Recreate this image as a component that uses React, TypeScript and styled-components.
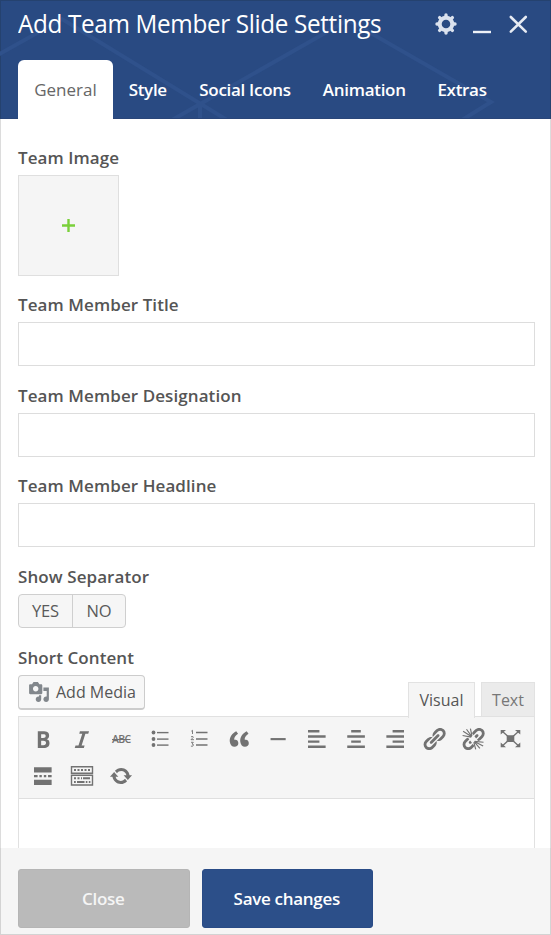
import React from "react";
import styled, { createGlobalStyle } from "styled-components";

const GlobalStyle = createGlobalStyle`
  *, *::before, *::after { box-sizing: border-box; }
  body { margin: 0; font-family: "Open Sans", "Noto Sans", sans-serif; }
  button, input { font-family: inherit; margin: 0; }
`;

const Panel = styled.div`
  width: 551px;
  height: 935px;
  display: flex;
  flex-direction: column;
  background: #fff;
  overflow: hidden;
`;

const Header = styled.header`
  position: relative;
  flex: 0 0 119px;
  display: flex;
  flex-direction: column;
  justify-content: space-between;
  background: #294a82;
  border: 1px solid #25426f;
  border-bottom-color: #2a4679;
  padding: 0 17px;
`;

const HeaderPattern = styled.svg`
  position: absolute;
  left: -1px;
  top: -1px;
`;

const TitleBar = styled.div`
  position: relative;
  display: flex;
  align-items: center;
  height: 46px;
`;

const Title = styled.h1`
  flex: 1;
  margin: 0;
  color: #fff;
  font-size: 25.5px;
  line-height: 44px;
  height: 46px;
  font-weight: 400;
  letter-spacing: -0.35px;
  transform: scaleX(0.951);
  transform-origin: left;
  white-space: nowrap;
`;

const WindowActions = styled.div`
  display: flex;
  align-items: center;
  gap: 16px;
  margin-right: 4px;
`;

const IconButton = styled.button`
  display: flex;
  padding: 0;
  border: 0;
  background: none;
`;

const Tabs = styled.nav`
  position: relative;
  display: flex;
  margin-bottom: -1px;
`;

const Tab = styled.button<{ $active?: boolean; $width: number }>`
  width: ${(p) => p.$width}px;
  height: 59px;
  padding: 0 0 1px;
  border: 0;
  border-radius: 6px 6px 0 0;
  background: ${(p) => (p.$active ? "#fff" : "transparent")};
  color: ${(p) => (p.$active ? "#666" : "#fff")};
  font-size: 17px;
  font-weight: ${(p) => (p.$active ? 400 : 600)};
  letter-spacing: ${(p) => (p.$active ? "0" : "-0.3px")};
  white-space: nowrap;
`;

const Body = styled.main`
  flex: 1;
  min-height: 0;
  overflow: hidden;
  display: flex;
  flex-direction: column;
  padding: 26px 16px 0 17px;
  border: solid #dcdcdc;
  border-width: 0 1px;
`;

const Field = styled.div<{ $height: number }>`
  flex: 0 0 ${(p) => p.$height}px;
`;

const Label = styled.label`
  display: block;
  height: 30px;
  color: #555;
  font-size: 17px;
  line-height: 25px;
  font-weight: 600;
  letter-spacing: 0.08px;
  white-space: nowrap;
`;

const ImagePicker = styled.button`
  display: grid;
  place-items: center;
  width: 101px;
  height: 101px;
  padding: 0;
  border: 1px solid #dfdfdf;
  background: #f5f5f5;
`;

const TextInput = styled.input`
  display: block;
  width: 517px;
  height: 44px;
  border: 1px solid #dddddd;
  background: #fff;
  outline: 0;
`;

const Toggle = styled.div`
  display: inline-flex;
  height: 34px;
  border: 1px solid #cfcfcf;
  border-radius: 4px;
  background: #f6f6f6;
`;

const ToggleOption = styled.button`
  width: 53px;
  padding: 0 0 1px;
  border: 0;
  background: none;
  color: #5a5a5a;
  font-size: 16.5px;
  letter-spacing: -0.2px;
  & + & { border-left: 1px solid #cfcfcf; }
`;

const EditorHead = styled.div`
  display: flex;
  justify-content: space-between;
  align-items: flex-start;
  height: 41px;
  width: 517px;
`;

const MediaButton = styled.button`
  display: flex;
  align-items: center;
  gap: 6px;
  width: 127px;
  height: 35px;
  padding: 0 0 0 9px;
  border: 1px solid #cccccc;
  border-bottom-width: 2px;
  border-radius: 4px;
  background: #f7f7f7;
  color: #555;
  font-size: 16px;
  white-space: nowrap;
`;

const EditorTabs = styled.div`
  position: relative;
  display: flex;
  gap: 6px;
  margin-top: 7px;
`;

const EditorTab = styled.button<{ $active?: boolean; $width: number }>`
  width: ${(p) => p.$width}px;
  height: ${(p) => (p.$active ? 36 : 34)}px;
  padding: 0 0 ${(p) => (p.$active ? 2 : 0)}px;
  border: 1px solid #e2e2e2;
  border-bottom: 0;
  background: ${(p) => (p.$active ? "#f5f5f5" : "#ebebeb")};
  color: ${(p) => (p.$active ? "#555" : "#777")};
  font-size: 16px;
`;

const Editor = styled.div`
  width: 517px;
  height: 140px;
  border: 1px solid #e1e1e1;
  background: #fff;
`;

const Toolbar = styled.div`
  display: grid;
  grid-template-columns: repeat(13, 39.1px);
  grid-auto-rows: 36.5px;
  height: 82px;
  padding: 4px 0 0 4.5px;
  background: #f5f5f5;
  border-bottom: 1px solid #dfdfdf;
`;

const ToolButton = styled.button`
  display: grid;
  place-items: center;
  padding: 0;
  border: 0;
  background: none;
  color: #727272;
`;

const StrikeGlyph = styled.span`
  font-size: 10.5px;
  font-weight: 600;
  letter-spacing: -0.7px;
  text-decoration: line-through;
`;

const Footer = styled.footer`
  flex: 0 0 87.5px;
  display: flex;
  gap: 12px;
  padding: 21.5px 17px 0;
  background: #f5f5f5;
  border: solid #d3d3d3;
  border-width: 0 1px 1px;
`;

const FooterButton = styled.button<{ $primary?: boolean }>`
  width: 171.5px;
  height: 59px;
  padding: 0 1px 1px 0;
  border: 1px solid ${(p) => (p.$primary ? "#294b86" : "#b5b5b5")};
  border-radius: 3px;
  background: ${(p) => (p.$primary ? "#2c4f89" : "#bababa")};
  color: ${(p) => (p.$primary ? "#fff" : "#f5f5f5")};
  font-size: 17px;
  font-weight: 600;
  letter-spacing: -0.3px;
`;

const Glyph = ({ d, size = 26 }: { d: string; size?: number }) => (
  <svg width={size} height={size} viewBox="0 0 20 20" fill="currentColor" fillRule="evenodd">
    <path d={d} />
  </svg>
);

const LINK =
  "M17.74 2.76c1.68 1.69 1.68 4.41 0 6.1l-1.53 1.52c-1.12 1.12-2.7 1.47-4.14 1.09l2.62-2.61.76-.77.76-.76c.84-.84.84-2.2 0-3.04-.84-.85-2.2-.85-3.04 0l-.77.76-3.38 3.38c-.37-1.44-.02-3.02 1.1-4.14l1.52-1.53c1.69-1.68 4.42-1.68 6.1 0zM8.59 13.43l5.34-5.34c.42-.42.42-1.1 0-1.52-.44-.43-1.13-.39-1.53 0l-5.33 5.34c-.42.42-.42 1.1 0 1.52.44.43 1.13.39 1.52 0zm-.76 2.29l4.14-4.15c.38 1.44.03 3.02-1.09 4.14l-1.52 1.53c-1.69 1.68-4.41 1.68-6.1 0-1.68-1.68-1.68-4.42 0-6.1l1.53-1.52c1.12-1.12 2.7-1.47 4.14-1.1l-4.14 4.15c-.85.84-.85 2.2 0 3.05.84.84 2.2.84 3.04 0z";

const GLYPHS = {
  bold: "M6 4v13h4.54c1.37 0 2.46-.33 3.26-1 .8-.66 1.2-1.58 1.2-2.77 0-.84-.17-1.51-.51-2.01s-.9-.85-1.67-1.03v-.09c.57-.1 1.02-.4 1.36-.9s.51-1.13.51-1.91c0-1.14-.39-1.98-1.17-2.5C12.75 4.26 11.5 4 9.78 4H6zm2.57 5.15V6.26h1.36c.73 0 1.27.11 1.61.32.34.22.51.58.51 1.07 0 .54-.16.92-.47 1.15s-.82.35-1.51.35h-1.5zm0 2.19h1.6c1.44 0 2.16.53 2.16 1.61 0 .6-.17 1.05-.51 1.34s-.86.43-1.57.43H8.57v-3.38z",
  italic: "M15.4 4h-7l-.5 2h2.3L7.3 15H5l-.6 2h7l.6-2H9.7l2.9-9h2.2z",
  quote:
    "M9.49 13.22c0-.74-.2-1.38-.61-1.9-.62-.78-1.83-.88-2.53-.72-.29-1.65 1.11-3.75 2.92-4.65L7.88 4c-2.73 1.3-5.42 4.28-4.96 8.05C3.21 14.43 4.59 16 6.54 16c.85 0 1.56-.25 2.12-.75s.83-1.18.83-2.03zm8.05 0c0-.74-.2-1.38-.61-1.9-.63-.78-1.83-.88-2.53-.72-.29-1.65 1.11-3.75 2.92-4.65L15.93 4c-2.73 1.3-5.41 4.28-4.95 8.05.29 2.38 1.66 3.95 3.61 3.95.85 0 1.56-.25 2.12-.75s.83-1.18.83-2.03z",
  rule: "M3.8 9.2h12.6v1.8H3.8z",
  left: "M2.5 2.6h9.5v2H2.5zM2.5 6.9h14.7v2H2.5zM2.5 11.2H12v2H2.5zM2.5 15.5h14.7v2H2.5z",
  center: "M6 2.6h8v2H6zM2.7 6.9h14.7v2H2.7zM6 11.2h8v2H6zM2.7 15.5h14.7v2H2.7z",
  right: "M8 2.6h9.5v2H8zM2.8 6.9h14.7v2H2.8zM8 11.2h9.5v2H8zM2.8 15.5h14.7v2H2.8z",
  more: "M2.5 2.8h14.7v4.2H2.5zM2.5 9.2h3v1.8h-3zM7 9.2h2v1.8H7zM10.7 9.2h2v1.8h-2zM14.2 9.2h3v1.8h-3zM2.5 13.2h14.7v4.2H2.5z",
  update:
    "M10.2 3.28c3.53 0 6.43 2.61 6.92 6h2.08l-3.5 4-3.5-4h2.32c-.45-1.97-2.21-3.45-4.32-3.45-1.45 0-2.73.71-3.54 1.78L4.95 5.66C6.23 4.2 8.11 3.28 10.2 3.28zm-.4 13.44c-3.52 0-6.43-2.61-6.92-6H.8l3.5-4c1.17 1.33 2.33 2.67 3.5 4H5.48c.45 1.97 2.21 3.45 4.32 3.45 1.45 0 2.73-.71 3.54-1.78l1.71 1.95c-1.28 1.46-3.15 2.38-5.25 2.38z",
  media:
    "M13 11V4c0-.55-.45-1-1-1h-1.67L9 1H5L3.67 3H2c-.55 0-1 .45-1 1v7c0 .55.45 1 1 1h10c.55 0 1-.45 1-1zM7 4.5c1.38 0 2.5 1.12 2.5 2.5S8.38 9.5 7 9.5 4.5 8.38 4.5 7 5.62 4.5 7 4.5zM14 6h5v10.5c0 1.38-1.12 2.5-2.5 2.5S14 17.88 14 16.5s1.12-2.5 2.5-2.5c.17 0 .34.02.5.05V9h-3V6zm-4 8.05V13h2v3.5c0 1.38-1.12 2.5-2.5 2.5S7 17.88 7 16.5 8.12 14 9.5 14c.17 0 .34.02.5.05z",
};

const BulletList = () => (
  <svg width="26" height="26" viewBox="0 0 26 26" fill="currentColor">
    {[6.5, 13, 19].map((y) => (
      <g key={y}>
        <circle cx="6.5" cy={y} r="1.9" />
        <rect x="10" y={y - 0.6} width="11.5" height="1.4" />
      </g>
    ))}
  </svg>
);

const NumberList = () => (
  <svg width="26" height="26" viewBox="0 0 26 26" fill="none" stroke="currentColor">
    <path d="M10 6.5h11.5M10 13h11.5M10 19h11.5" strokeWidth="1.3" />
    <path d="M5.3 5.2 6.5 4.3V8M5 10.8q2.6-1 2.2.6L5 13.7h3M5 16.3h2.3L6 18q2.2.1 1.1 1.9-.7.7-2.2.2" strokeWidth=".9" />
  </svg>
);

const Unlink = () => (
  <svg width="26" height="26" viewBox="0 0 20 20">
    <path d={LINK} fill="currentColor" />
    <path d="M4 2.5 16 18" stroke="#f5f5f5" strokeWidth="4.6" />
    <path
      d="M9 8.2 2.4 4.1M9 8 5 2.5M9.2 7.5 8 2M11 12l6.8 3.4M11 12.3l4.3 5M10.6 12.4l1.5 5.6M8.6 8.5 2 7.3M11.3 11.8l6.8.7"
      stroke="currentColor"
      strokeWidth=".9"
    />
  </svg>
);

const Fullscreen = () => (
  <svg width="28" height="26" viewBox="1.5 0 26 26" fill="currentColor">
    <path d="M9.2 9.3h7.6v6.6H9.2zM3.2 4h5.3L3.2 8.6zM22.8 4h-5.3l5.3 4.6zM3.2 21.3h5.3l-5.3-4.7zM22.8 21.3h-5.3l5.3-4.7z" />
    <path d="m5 5.5 16 14.2M21 5.5 5 19.7" stroke="currentColor" strokeWidth="1.4" />
  </svg>
);

const Keyboard = () => (
  <svg width="26" height="26" viewBox="0 0 26 26" fill="none" stroke="currentColor">
    <path d="M2.5 3.8h21v6.4h-21zM2.5 12.3h21v9.7h-21z" strokeWidth="1.4" />
    <path d="M5 7h16M5 15.3h8" strokeWidth="2" strokeDasharray="2 1.5" />
    <path d="M14 15.3h7M5 19h1.8M8 19h7.5M16.8 19h1.6M19.8 19h1.6" strokeWidth="2" />
  </svg>
);

const Gear = () => (
  <svg width="22" height="22" viewBox="-11 -11 22 22" fill="none" stroke="#dbe2ee">
    <circle r="6.3" strokeWidth="4" />
    {[0, 45, 90, 135].map((a) => (
      <path key={a} d="M0-9V-7M0 7v2" strokeWidth="3.4" strokeLinecap="round" transform={`rotate(${a})`} />
    ))}
  </svg>
);

const tools: [string, React.ReactNode][] = [
  ["Bold", <Glyph d={GLYPHS.bold} />],
  ["Italic", <Glyph d={GLYPHS.italic} />],
  ["Strikethrough", <StrikeGlyph>ABC</StrikeGlyph>],
  ["Bulleted list", <BulletList />],
  ["Numbered list", <NumberList />],
  ["Blockquote", <Glyph d={GLYPHS.quote} />],
  ["Horizontal line", <Glyph d={GLYPHS.rule} size={24} />],
  ["Align left", <Glyph d={GLYPHS.left} size={24} />],
  ["Align center", <Glyph d={GLYPHS.center} size={24} />],
  ["Align right", <Glyph d={GLYPHS.right} size={24} />],
  ["Insert link", <Glyph d={LINK} />],
  ["Remove link", <Unlink />],
  ["Fullscreen", <Fullscreen />],
  ["Read more", <Glyph d={GLYPHS.more} size={24} />],
  ["Toolbar toggle", <Keyboard />],
  ["Refresh", <Glyph d={GLYPHS.update} size={24} />],
];

const tabs: [string, number][] = [
  ["General", 95],
  ["Style", 69.5],
  ["Social Icons", 125],
  ["Animation", 113.5],
  ["Extras", 82],
];

export default function App() {
  return (
    <>
      <GlobalStyle />
      <Panel>
        <Header>
          <HeaderPattern width="551" height="118" fill="none" stroke="#2f518b" strokeWidth="4">
            <path d="M-4 56 62 19 227 120M172 120 348 20 491 102 462 120M200 104v16" />
          </HeaderPattern>
          <TitleBar>
            <Title>Add Team Member Slide Settings</Title>
            <WindowActions>
              <IconButton aria-label="Settings"><Gear /></IconButton>
              <IconButton aria-label="Minimize">
                <svg width="18" height="22"><path d="M0 19h18" stroke="#edf1f7" strokeWidth="2.4" /></svg>
              </IconButton>
              <IconButton aria-label="Close panel">
                <svg width="22" height="22"><path d="m3.8 4 15 14.6M18.8 4l-15 14.6" stroke="#e6ebf3" strokeWidth="2.6" strokeLinecap="round" /></svg>
              </IconButton>
            </WindowActions>
          </TitleBar>
          <Tabs>
            {tabs.map(([name, width], i) => (
              <Tab key={name} $active={i === 0} $width={width}>{name}</Tab>
            ))}
          </Tabs>
        </Header>
        <Body>
          <Field $height={147}>
            <Label>Team Image</Label>
            <ImagePicker aria-label="Add image">
              <svg width="13" height="13"><path d="M6.5 0v13M0 6.5h13" stroke="#7ad03a" strokeWidth="2.4" /></svg>
            </ImagePicker>
          </Field>
          <Field $height={91}><Label>Team Member Title</Label><TextInput /></Field>
          <Field $height={90}><Label>Team Member Designation</Label><TextInput /></Field>
          <Field $height={91}><Label>Team Member Headline</Label><TextInput /></Field>
          <Field $height={81}>
            <Label>Show Separator</Label>
            <Toggle>
              <ToggleOption>YES</ToggleOption>
              <ToggleOption>NO</ToggleOption>
            </Toggle>
          </Field>
          <Field $height={220}>
            <Label>Short Content</Label>
            <EditorHead>
              <MediaButton>
                <svg width="22" height="22" viewBox="0 0 20 20" fill="#82878c" fillRule="evenodd"><path d={GLYPHS.media} /></svg>
                Add Media
              </MediaButton>
              <EditorTabs>
                <EditorTab $active $width={67}>Visual</EditorTab>
                <EditorTab $width={54}>Text</EditorTab>
              </EditorTabs>
            </EditorHead>
            <Editor>
              <Toolbar>
                {tools.map(([name, icon]) => (
                  <ToolButton key={name} aria-label={name}>{icon}</ToolButton>
                ))}
              </Toolbar>
            </Editor>
          </Field>
        </Body>
        <Footer>
          <FooterButton>Close</FooterButton>
          <FooterButton $primary>Save changes</FooterButton>
        </Footer>
      </Panel>
    </>
  );
}
